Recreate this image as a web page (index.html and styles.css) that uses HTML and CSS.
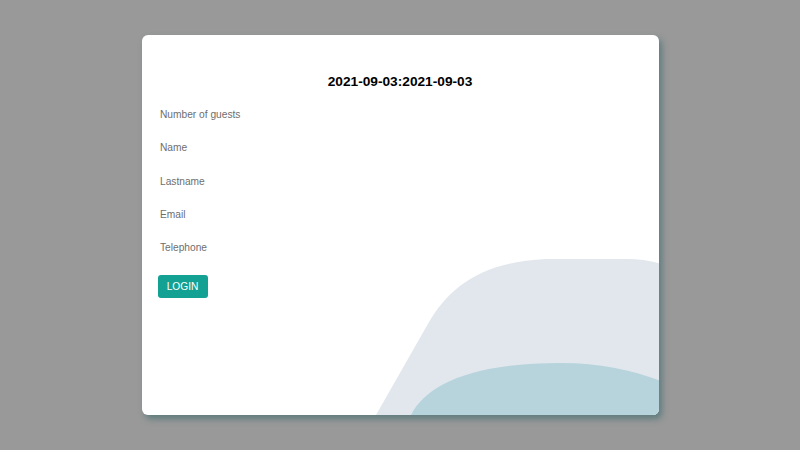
FILE: index.html
```html
<!DOCTYPE html>
<html lang="en">
<head>
<meta charset="utf-8">
<title>Booking</title>
<link rel="stylesheet" href="styles.css">
</head>
<body>
<main class="card">
  <svg class="waves" viewBox="141 35 517 380" preserveAspectRatio="none" aria-hidden="true">
    <path class="wave-light" d="M375 415 L428 322 C448 288 480 262 545 259 L625 259 Q645 259 660 264 V415 Z"/>
    <path class="wave-dark" d="M410 415 C425 385 470 363 560 363 C600 363 630 370 660 381 V415 Z"/>
  </svg>
  <h1 class="title">2021-09-03:2021-09-03</h1>
  <form class="form">
    <div class="field">Number of guests</div>
    <div class="field">Name</div>
    <div class="field">Lastname</div>
    <div class="field">Email</div>
    <div class="field">Telephone</div>
    <button type="button" class="btn">LOGIN</button>
  </form>
</main>
</body>
</html>
```
FILE: styles.css
```css
html, body {
  margin: 0;
  padding: 0;
}
body {
  background: #999999;
  height: 100vh;
  display: flex;
  align-items: center;
  justify-content: center;
  font-family: "Liberation Sans", Arial, sans-serif;
}
.card {
  position: relative;
  width: 517px;
  height: 380px;
  background: #ffffff;
  border-radius: 6px;
  overflow: hidden;
  box-shadow: 3px 4px 6px rgba(40, 95, 100, 0.5);
  padding: 0 16px;
  box-sizing: border-box;
}
.waves {
  position: absolute;
  left: 0;
  top: 0;
  width: 517px;
  height: 380px;
}
.wave-light { fill: #e2e7ed; }
.wave-dark { fill: #b7d4dc; }
.title {
  position: relative;
  margin: 30px 0 0;
  line-height: 34px;
  height: 33px;
  font-size: 13.7px;
  font-weight: bold;
  color: #000000;
  text-align: center;
}
.form {
  position: relative;
  display: flex;
  flex-direction: column;
  align-items: flex-start;
}
.field {
  height: 33.25px;
  line-height: 33.25px;
  padding-left: 2.5px;
  font-size: 10.2px;
  color: #6e6e6e;
}
.btn {
  margin-top: 11px;
  width: 50px;
  height: 23px;
  border: none;
  border-radius: 3px;
  background: #12a193;
  color: #ffffff;
  font-family: "Liberation Sans", Arial, sans-serif;
  font-size: 10.2px;
  padding: 0;
  cursor: pointer;
}
```
